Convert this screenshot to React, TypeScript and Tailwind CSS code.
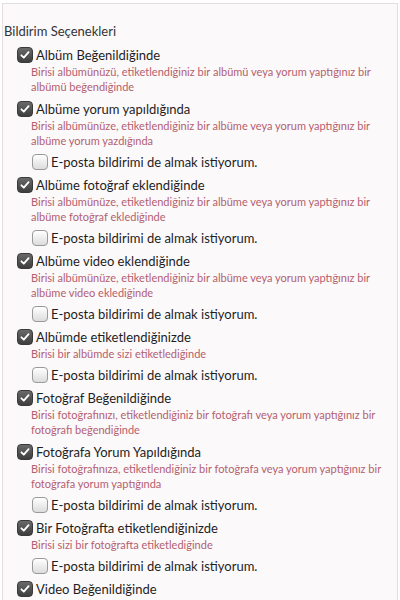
import React from 'react';

type Option = {
  title: string;
  desc: string;
  email?: boolean;
};

const options: Option[] = [
  {
    title: 'Albüm Beğenildiğinde',
    desc: 'Birisi albümünüzü, etiketlendiğiniz bir albümü veya yorum yaptığınız bir albümü beğendiğinde',
  },
  {
    title: 'Albüme yorum yapıldığında',
    desc: 'Birisi albümünüze, etiketlendiğiniz bir albüme veya yorum yaptığınız bir albüme yorum yazdığında',
    email: true,
  },
  {
    title: 'Albüme fotoğraf eklendiğinde',
    desc: 'Birisi albümünüze, etiketlendiğiniz bir albüme veya yorum yaptığınız bir albüme fotoğraf eklediğinde',
    email: true,
  },
  {
    title: 'Albüme video eklendiğinde',
    desc: 'Birisi albümünüze, etiketlendiğiniz bir albüme veya yorum yaptığınız bir albüme video eklediğinde',
    email: true,
  },
  {
    title: 'Albümde etiketlendiğinizde',
    desc: 'Birisi bir albümde sizi etiketlediğinde',
    email: true,
  },
  {
    title: 'Fotoğraf Beğenildiğinde',
    desc: 'Birisi fotoğrafınızı, etiketlendiğiniz bir fotoğrafı veya yorum yaptığınız bir fotoğrafı beğendiğinde',
  },
  {
    title: 'Fotoğrafa Yorum Yapıldığında',
    desc: 'Birisi fotoğrafınıza, etiketlendiğiniz bir fotoğrafa veya yorum yaptığınız bir fotoğrafa yorum yaptığında',
    email: true,
  },
  {
    title: 'Bir Fotoğrafta etiketlendiğinizde',
    desc: 'Birisi sizi bir fotoğrafta etiketlediğinde',
    email: true,
  },
  {
    title: 'Video Beğenildiğinde',
    desc: '',
  },
];

function CheckedBox() {
  return (
    <span className="flex h-[16px] w-[16px] shrink-0 items-center justify-center rounded-[4px] border border-[#3a3a3a] bg-gradient-to-b from-[#6a6a6a] to-[#3e3e3e]">
      <svg viewBox="0 0 16 16" className="h-[12px] w-[12px]">
        <path d="M3.2 8.4 L6.4 11.6 L12.8 4.2" fill="none" stroke="#fff" strokeWidth="2.4" strokeLinecap="round" strokeLinejoin="round" />
      </svg>
    </span>
  );
}

function EmptyBox() {
  return (
    <span className="h-[16px] w-[16px] shrink-0 rounded-[4px] border border-[#9a9a9a] bg-gradient-to-b from-[#ffffff] to-[#dcdcdc]" />
  );
}

export default function App() {
  return (
    <div className="h-[600px] overflow-hidden bg-white" style={{ fontFamily: 'Lato, "Open Sans", sans-serif' }}>
      <div className="mx-[2px] mt-[3px] min-h-[597px] border-x border-t border-[#e4dde1] bg-[#fcf9fb] pt-[18px]">
        <h2 className="pl-[1px] text-[13px] leading-[18px] text-[#333]">Bildirim Seçenekleri</h2>
        <div className="mt-[6px] flex flex-col">
          {options.map((opt) => (
            <div key={opt.title} className={opt.email ? 'pl-[14px] pb-[5px]' : 'pl-[14px] pb-[6px]'}>
              <label className="flex items-center gap-[3px]">
                <CheckedBox />
                <span className="text-[13px] leading-[18px] text-[#1e1e1e]">{opt.title}</span>
              </label>
              {opt.desc && (
                <p className="pl-[14px] pr-[12px] text-[11px] leading-[15px] text-[#b3606e]">{opt.desc}</p>
              )}
              {opt.email && (
                <label className="mt-[5px] flex items-center gap-[3px] pl-[15px]">
                  <EmptyBox />
                  <span className="text-[13px] leading-[18px] text-[#1e1e1e]">E-posta bildirimi de almak istiyorum.</span>
                </label>
              )}
            </div>
          ))}
        </div>
      </div>
    </div>
  );
}
